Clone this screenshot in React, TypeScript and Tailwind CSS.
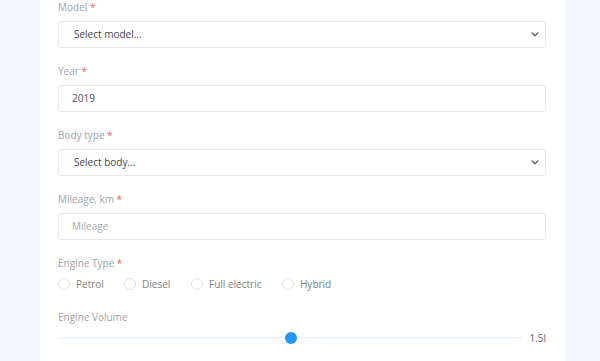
import React from "react";

const font = { fontFamily: "'Open Sans', 'Noto Sans', sans-serif" };

function Label({ children, required }: { children: React.ReactNode; required?: boolean }) {
  return (
    <div className="h-[14px] text-[10px] leading-[14px] text-[#9ea2a8]">
      {children}
      {required && <span className="text-[#f0606a]"> *</span>}
    </div>
  );
}

function SelectBox({ text }: { text: string }) {
  return (
    <div className="mt-[7px] flex h-[27px] items-center justify-between rounded-[3px] border border-[#e5e7ea] bg-white pl-[15px] pr-[6px]">
      <span className="text-[10px] text-[#3f4650]">{text}</span>
      <svg viewBox="0 0 10 6" className="h-[5px] w-[8px]" fill="none" stroke="#5a6270" strokeWidth="1.8" strokeLinecap="round" strokeLinejoin="round" aria-hidden="true">
        <path d="M1.5 1.2 5 4.5 8.5 1.2" />
      </svg>
    </div>
  );
}

function TextBox({ text, placeholder }: { text?: string; placeholder?: string }) {
  return (
    <div className="mt-[7px] flex h-[27px] items-center rounded-[3px] border border-[#e5e7ea] bg-white pl-[13px]">
      {text ? (
        <span className="text-[10px] text-[#4a5260]">{text}</span>
      ) : (
        <span className="text-[10px] text-[#a4a8ae]">{placeholder}</span>
      )}
    </div>
  );
}

function Radio({ label }: { label: string }) {
  return (
    <div className="flex items-center gap-[6px]">
      <span className="h-[12px] w-[12px] rounded-full border border-[#dfe2e6] bg-white" />
      <span className="text-[10px] text-[#7a7f86]">{label}</span>
    </div>
  );
}

export default function App() {
  return (
    <div className="flex h-[361px] w-[600px] overflow-hidden bg-[#f4f8fc]" style={font}>
      <div className="ml-[40px] w-[525px] bg-white pl-[18px] pr-[19px]">
        <div className="flex flex-col gap-[16px]">
          <div>
            <Label required>Model</Label>
            <SelectBox text="Select model..." />
          </div>
          <div>
            <Label required>Year</Label>
            <TextBox text="2019" />
          </div>
          <div>
            <Label required>Body type</Label>
            <SelectBox text="Select body..." />
          </div>
          <div>
            <Label required>Mileage, km</Label>
            <TextBox placeholder="Mileage" />
          </div>
        </div>
        <div className="mt-[16px]">
          <Label required>Engine Type</Label>
          <div className="mt-[7px] flex h-[14px] items-center">
            <div className="w-[66px]"><Radio label="Petrol" /></div>
            <div className="w-[67px]"><Radio label="Diesel" /></div>
            <div className="w-[91px]"><Radio label="Full electric" /></div>
            <Radio label="Hybrid" />
          </div>
        </div>
        <div className="mt-[19px]">
          <Label>Engine Volume</Label>
          <div className="mt-[8px] flex h-[12px] items-center">
            <div className="relative h-[2px] w-[464px] bg-[#eef5fc]">
              <span className="absolute left-[227px] top-[-5px] h-[12px] w-[12px] rounded-full bg-[#2196f3]" />
            </div>
            <span className="ml-auto text-[10px] text-[#5c636c]">1.5l</span>
          </div>
        </div>
      </div>
    </div>
  );
}
